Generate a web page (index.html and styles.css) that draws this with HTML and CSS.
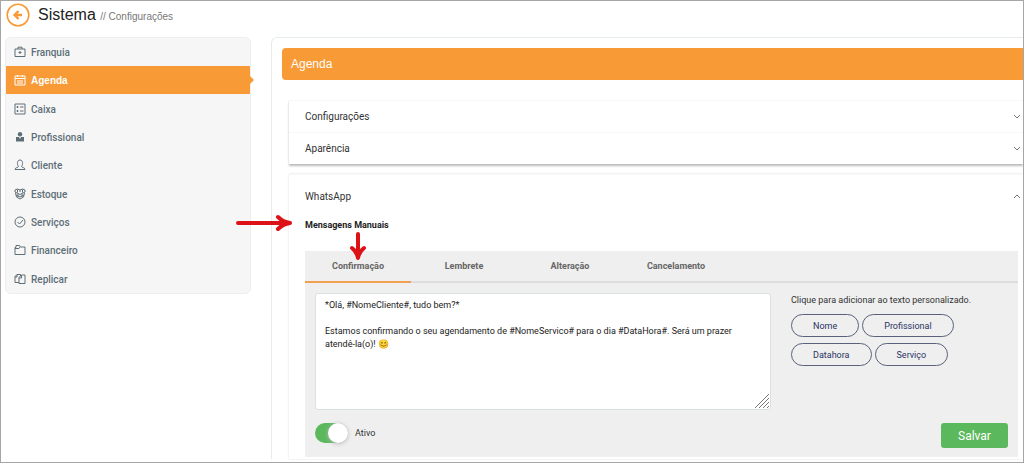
FILE: index.html
```
<!DOCTYPE html>
<html lang="pt-BR">
<head>
    <meta charset="UTF-8">
    <meta name="viewport" content="width=device-width, initial-scale=1.0">
    <title>Sistema // Configurações</title>
    <link rel="stylesheet" href="styles.css">
</head>
<body>
    <header class="topo">
        <a href="#" class="voltar" aria-label="Voltar">
            <svg width="24" height="24" viewBox="0 0 24 24">
                <circle cx="12" cy="12" r="10.8" fill="#fff" stroke="#f89a36" stroke-width="1.6"/>
                <path d="M16 12H8.5M12.5 8l-4 4 4 4" fill="none" stroke="#f89a36" stroke-width="2.4"/>
            </svg>
        </a>
        <h1>Sistema <small>// Configurações</small></h1>
    </header>
    <div class="conteudo">
        <nav class="menu">
            <a href="#">
                <svg viewBox="0 0 12 12"><path d="M1 3h10v7.5H1zM4 3V1.2h4V3M6 5v3M4.5 6.5h3"/></svg>
                Franquia
            </a>
            <a href="#" class="active">
                <svg viewBox="0 0 12 12"><path d="M1 2h10v9H1zM1 4.5h10M3.5 1v2M8.5 1v2M3 7h6M3 9h6"/></svg>
                Agenda
            </a>
            <a href="#">
                <svg viewBox="0 0 12 12"><path d="M1 1h10v10H1zM2.5 4h2M6 4h3.5M2.5 8h2M6 8h3.5M3.5 3v2M3.5 7v2"/></svg>
                Caixa
            </a>
            <a href="#">
                <svg viewBox="0 0 12 12"><circle class="cheio" cx="6" cy="3.2" r="2.2"/><path class="cheio" d="M2 6h3l1 2 1-2h3v4.5H2z"/></svg>
                Profissional
            </a>
            <a href="#">
                <svg viewBox="0 0 12 12"><path d="M4.5 7.5C2.8 5.5 3 1 6 1s3.2 4.5 1.5 6.5c0 1 3.5.8 3.5 3H1c0-2.2 3.5-2 3.5-3z"/></svg>
                Cliente
            </a>
            <a href="#">
                <svg viewBox="0 0 12 12"><path d="M1 2l2.5-1L6 2l2.5-1L11 2v2L6 6.5 1 4zM1.5 5l1 4L6 11l3.5-2 1-4M6 2v2M3.5 1.5v3M8.5 1.5v3M2 7l4 2 4-2M4 6v3M8 6v3"/></svg>
                Estoque
            </a>
            <a href="#">
                <svg viewBox="0 0 12 12"><circle cx="6" cy="6" r="5"/><path d="M3.5 6l2 2 3.5-4"/></svg>
                Serviços
            </a>
            <a href="#">
                <svg viewBox="0 0 12 12"><path d="M1 10.5v-7h1v-2h3.5l1 1.5H11v7.5zM1 4.5h4l1-1.5"/></svg>
                Financeiro
            </a>
            <a href="#">
                <svg viewBox="0 0 12 12"><path d="M5 4.5l2.5-2.5H11v8.5H5zM5 5h2.5V2M5 9.5H1V3.500L3 1.500h3.500V3M1 4h2V1.500"/></svg>
                Replicar
            </a>
        </nav>
        <main class="painel">
            <h2 class="painel-titulo">Agenda</h2>
            <section class="cartao">
                <button type="button" class="sanfona">Configurações
                    <svg viewBox="0 0 8 6"><path d="M1 1l3 3 3-3"/></svg>
                </button>
                <button type="button" class="sanfona">Aparência
                    <svg viewBox="0 0 8 6"><path d="M1 1l3 3 3-3"/></svg>
                </button>
            </section>
            <section class="cartao aberto">
                <button type="button" class="sanfona">WhatsApp
                    <svg viewBox="0 0 8 6"><path d="M1 5l3-3 3 3"/></svg>
                </button>
                <h3>Mensagens Manuais
                    <svg class="seta seta-direita" width="58" height="18" viewBox="0 0 58 18"><path d="M3 9h48M43 3q5 5 12 6q-7 1-12 6"/></svg>
                    <svg class="seta seta-baixo" width="18" height="31" viewBox="0 0 18 31"><path d="M9 3v20M3 17q5 4 6 10q1-6 6-10"/></svg>
                </h3>
                <div class="mensagens">
                    <div class="abas">
                        <button type="button" class="active">Confirmação</button>
                        <button type="button">Lembrete</button>
                        <button type="button">Alteração</button>
                        <button type="button">Cancelamento</button>
                    </div>
                    <form class="formulario">
                        <div class="caixa-texto">
                            <textarea aria-label="Mensagem de confirmação">*Olá, #NomeCliente#, tudo bem?*

Estamos confirmando o seu agendamento de #NomeServico# para o dia #DataHora#. Será um prazer atendê-la(o)! 😊</textarea>
                            <svg class="alca" width="16" height="16" viewBox="0 0 16 16"><path d="M1 15L15 1M5 15L15 5M9 15l6-6M13 15l2-2"/></svg>
                        </div>
                        <div class="campos">
                            <p>Clique para adicionar ao texto personalizado.</p>
                            <div class="etiquetas">
                                <button type="button">Nome</button>
                                <button type="button">Profissional</button>
                                <button type="button">Datahora</button>
                                <button type="button">Serviço</button>
                            </div>
                        </div>
                        <label class="ativo"><input type="checkbox" checked> Ativo</label>
                        <button type="submit" class="salvar">Salvar</button>
                    </form>
                </div>
            </section>
        </main>
    </div>
</body>
</html>
```
FILE: styles.css
```
* {
    box-sizing: border-box;
}
body {
    margin: 0;
    min-height: 100vh;
    border: 1px solid #a6a6a6;
    background-color: white;
    font-family: Roboto, sans-serif;
    font-size: 10px;
    color: #333;
}
h1, h2, h3, p {
    margin: 0;
}
button {
    font-family: inherit;
    font-size: 10px;
    color: inherit;
    padding: 0;
    border: none;
    background: none;
    cursor: pointer;
}
.topo {
    display: flex;
    align-items: center;
    gap: 8px;
    height: 28px;
    padding-left: 5px;
}
.voltar svg {
    display: block;
}
.topo h1 {
    font-family: "Liberation Sans", sans-serif;
    font-size: 16px;
    font-weight: normal;
    color: #222;
}
.topo small {
    font-size: 10px;
    color: #777;
}
.conteudo {
    display: flex;
    align-items: flex-start;
    gap: 20px;
    padding: 8px 0 0 4px;
}
.menu {
    flex: none;
    width: 246px;
    border: 1px solid #eee;
    border-radius: 6px;
    background-color: #f6f6f6;
}
.menu a {
    display: flex;
    align-items: center;
    gap: 5px;
    height: 28px;
    padding-left: 8px;
    font-weight: 500;
    color: #5e6e76;
    text-decoration: none;
}
.menu a:nth-child(3n+2) {
    margin-bottom: 1px;
}
.menu a.active {
    position: relative;
    background-color: #f89a36;
    font-family: "Liberation Sans", sans-serif;
    font-weight: bold;
    color: white;
}
.menu a.active::after {
    content: "";
    position: absolute;
    right: -4px;
    top: 10px;
    border: 4px solid transparent;
    border-right: none;
    border-left-color: #f89a36;
}
.menu svg {
    width: 12px;
    height: 12px;
    fill: none;
    stroke: currentColor;
}
.menu .cheio {
    fill: currentColor;
    stroke: none;
}
.painel {
    flex: 1;
    min-width: 0;
    padding: 10px 0 0 10px;
    border: 1px solid #e6ecee;
    border-width: 1px 0 0 1px;
    border-radius: 6px 0 0 0;
}
.painel-titulo {
    padding-left: 9px;
    border-radius: 4px 0 0 4px;
    background-color: #f89a36;
    font-family: "Liberation Sans", sans-serif;
    font-size: 12px;
    font-weight: normal;
    line-height: 32px;
    color: white;
}
.cartao {
    margin: 20px 0 0 7px;
    box-shadow: 0 2px 2px #bbb;
}
.sanfona {
    display: flex;
    align-items: center;
    justify-content: space-between;
    width: 100%;
    height: 32px;
    padding: 0 2px 0 16px;
    border-top: 1px solid #f8f8f8;
}
.sanfona svg {
    width: 8px;
    height: 6px;
    fill: none;
    stroke: #777;
}
.aberto {
    margin-top: 10px;
    padding-bottom: 2px;
    box-shadow: 0 0 2px #ddd;
}
.aberto .sanfona {
    height: 43px;
}
.aberto h3 {
    position: relative;
    padding-left: 16px;
    font-size: 9px;
    line-height: 16px;
    color: #222;
}
.seta {
    position: absolute;
    fill: none;
    stroke: #dd1217;
    stroke-width: 4;
    stroke-linecap: round;
    stroke-linejoin: round;
}
.seta-direita {
    left: -54px;
    top: -3px;
}
.seta-baixo {
    left: 60px;
    top: 14px;
}
.mensagens {
    margin: 18px 5px 0 16px;
    background-color: #efefef;
}
.abas {
    display: flex;
    border-bottom: 2px solid #ddd;
}
.abas button {
    width: 106px;
    height: 32px;
    margin-bottom: -2px;
    border-bottom: 2px solid transparent;
    font-size: 9px;
    font-weight: bold;
    color: #666;
}
.abas button.active {
    border-bottom-color: #f0a050;
}
.formulario {
    display: grid;
    grid-template-columns: 456px 1fr;
    column-gap: 20px;
    row-gap: 13px;
    padding: 10px 10px 9px;
    font-size: 9px;
}
.caixa-texto {
    position: relative;
}
textarea {
    display: block;
    width: 100%;
    height: 117px;
    padding: 5px 9px;
    border: 1px solid #dbe0e0;
    border-radius: 3px;
    background-color: white;
    font-family: Roboto, sans-serif;
    font-size: 9px;
    line-height: 13px;
    color: #222;
    resize: none;
}
.alca {
    position: absolute;
    right: 1px;
    bottom: 1px;
    stroke: #777;
}
.campos p {
    line-height: 14px;
}
.etiquetas {
    display: flex;
    flex-wrap: wrap;
    gap: 6px 3px;
    width: 170px;
    margin-top: 7px;
}
.etiquetas button {
    height: 23px;
    padding: 0 21px;
    border: 1px solid #59627a;
    border-radius: 12px;
    font-size: 9px;
    color: #2a3463;
}
.ativo {
    display: flex;
    align-items: center;
    align-self: start;
    gap: 7px;
}
.ativo input {
    appearance: none;
    width: 33px;
    height: 20px;
    margin: 0;
    border-radius: 10px;
    background-color: #5cb85c;
}
.ativo input::before {
    content: "";
    display: block;
    width: 20px;
    height: 20px;
    margin-left: auto;
    border-radius: 50%;
    background-color: white;
    box-shadow: 0 1px 4px #bbb;
}
.salvar {
    justify-self: end;
    width: 67px;
    height: 25px;
    border-radius: 3px;
    background-color: #5cb85c;
    font-size: 12px;
    color: white;
}
```
